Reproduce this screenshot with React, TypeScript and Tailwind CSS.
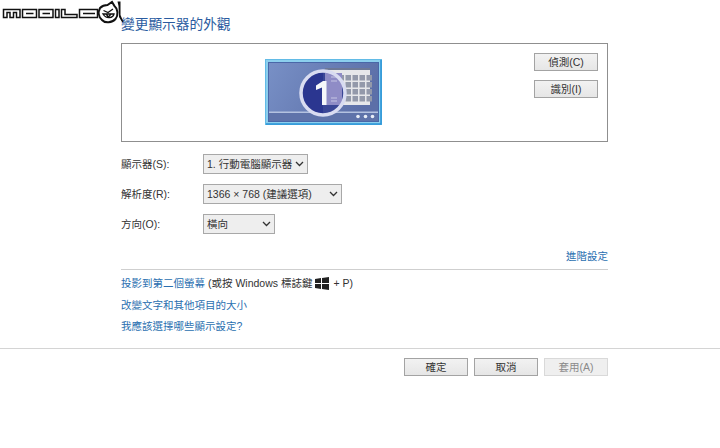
import React from "react";

const font = { fontFamily: '"Liberation Sans", "Noto Sans CJK TC", sans-serif' };

function Logo() {
  return (
    <svg width="125" height="24" viewBox="0 0 125 24" className="absolute left-0 top-0">
      <g fill="none" stroke="#111" strokeWidth="1.500">
        <path d="M3.500 17.500V9.500H20V17.500H16.500V12.500H13.500V17.500H10V12.500H7V17.500Z" />
        <rect x="22.500" y="9.500" width="14" height="8" />
        <path d="M26 13.500H33.500" />
        <path d="M39 9.500H53V17.500H39ZM42.500 13.500H50" />
        <path d="M55.500 9.500H59V17.500H55.500Z" />
        <path d="M61.500 9.500H65V14.500H77V17.500H61.500Z" />
        <path d="M79.500 9.500H97.500V17.500H79.500ZM83 13.500H95" />
      </g>
      <path d="M100 8C102 6 105 5 107.500 5L112 2L114.500 6C118 9 118.500 15 115.500 19C112 23 105 23.500 102 20C98.500 17 98 12 100 8Z" fill="#fff" stroke="#111" strokeWidth="2" />
      <path d="M103.500 10.500L108 12.500L113 9M103 14H114C113 18 106.500 19.500 103 14ZM106 14L108.500 17L111 14" fill="none" stroke="#111" strokeWidth="1.300" />
      <path d="M117.500 1.500H120.500V15L123.500 22H122L119 17L118.500 6Z" fill="#111" />
    </svg>
  );
}

function Monitor() {
  return (
    <svg width="117" height="66" viewBox="0 0 117 66" className="block">
      <defs>
        <linearGradient id="bg" x1="0" y1="0" x2="1" y2="0.300">
          <stop offset="0" stopColor="#7890c6" />
          <stop offset="1" stopColor="#5c6fa8" />
        </linearGradient>
      </defs>
      <rect x="0.500" y="0.500" width="116" height="65" fill="#8ccfee" stroke="#62bbe6" />
      <path d="M116 1V65H1" fill="none" stroke="#2a94d6" strokeWidth="1.500" />
      <rect x="3.500" y="3.500" width="110" height="59" fill="url(#bg)" stroke="#4a67a8" />
      <rect x="4" y="52.500" width="109" height="1.500" fill="#b4c2e0" />
      <rect x="4" y="54" width="109" height="8" fill="#5f73aa" />
      <circle cx="93" cy="57.500" r="1.800" fill="#e8edf6" />
      <circle cx="100.500" cy="57.500" r="1.800" fill="#e8edf6" />
      <circle cx="107.500" cy="57.500" r="1.800" fill="#e8edf6" />
      <rect x="60" y="9" width="45" height="37" fill="#e6e7ea" />
      <rect x="60" y="9" width="45" height="2" fill="#6d7896" />
      {[0, 1, 2, 3, 4].map((c) =>
        [0, 1, 2, 3].map((r) => (
          <rect key={`${c}-${r}`} x={73.500 + c * 7} y={16 + r * 7} width="5.500" height="5.500" fill="#9399aa" />
        ))
      )}
      <path d="M58 11.500A22.500 22.500 0 0 0 58 56.500Z" fill="#2b3690" />
      <path d="M58 11.500A22.500 22.500 0 0 1 58 56.500Z" fill="#3a4696" />
      <rect x="60" y="14" width="17" height="32" fill="#8f8cc6" />
      <g stroke="#c6c6e4" strokeWidth="1">
        <path d="M66 18H72M66 22H72M66 39H72M66 42H72" />
      </g>
      <circle cx="58" cy="34" r="22" fill="none" stroke="#d9dcf1" strokeWidth="3.500" />
      <path d="M51 26.500L58 22H61.500V46H57V28.500L51 31Z" fill="#f6f7fa" />
    </svg>
  );
}

function Btn({ children, disabled }: { children: React.ReactNode; disabled?: boolean }) {
  return (
    <div
      className={`w-[64px] h-[18px] flex items-center justify-center text-[10.500px] leading-none border ${
        disabled
          ? "border-[#d9d9d9] bg-[#efefef] text-[#8a8a8a]"
          : "border-[#a3a3a3] bg-gradient-to-b from-[#f2f2f2] to-[#e6e6e6] text-[#333]"
      }`}
    >
      {children}
    </div>
  );
}

function Row({ label, value, w, mt }: { label: string; value: string; w: string; mt: string }) {
  return (
    <div className={`flex items-center ${mt}`}>
      <div className="w-[82px] text-[10.500px] leading-none text-[#333]">{label}</div>
      <div className={`${w} h-[20px] flex items-center justify-between pl-[3px] pr-[3px] border border-[#a8a8a8] bg-[#eeeeee] text-[10.500px] leading-none text-[#333]`}>
        <span className="whitespace-nowrap">{value}</span>
        <svg width="9" height="6" viewBox="0 0 9 6" className="shrink-0">
          <path d="M1 1L4.500 4.500L8 1" fill="none" stroke="#333" strokeWidth="1.300" />
        </svg>
      </div>
    </div>
  );
}

export default function App() {
  return (
    <div className="relative w-[720px] h-[448px] bg-white overflow-hidden" style={font}>
      <Logo />
      <div className="pl-[121px] pr-[112px]">
        <div className="pt-[17px] h-[43px] text-[13.700px] leading-[16px] text-[#2a5ba0] whitespace-nowrap">變更顯示器的外觀</div>
        <div className="h-[99px] border border-[#8f8f8f] flex relative pt-[15px] pl-[143px]">
          <Monitor />
          <div className="absolute right-[9px] top-[9px] flex flex-col gap-[9px]">
            <Btn>偵測(C)</Btn>
            <Btn>識別(I)</Btn>
          </div>
        </div>
        <Row label="顯示器(S):" value="1. 行動電腦顯示器" w="w-[105px]" mt="mt-[12px]" />
        <Row label="解析度(R):" value="1366 × 768 (建議選項)" w="w-[139px]" mt="mt-[10px]" />
        <Row label="方向(O):" value="橫向" w="w-[72px]" mt="mt-[10px]" />
        <div className="mt-[15px] text-right text-[10.500px] leading-[14px] text-[#2a6fb0]">進階設定</div>
        <div className="mt-[6px] border-t border-[#cfcfcf]" />
        <div className="mt-[6px] flex items-center text-[10.500px] leading-[14px] text-[#333] whitespace-nowrap">
          <span className="text-[#2a6fb0]">投影到第二個螢幕</span>
          <span className="ml-[3px]">(或按 Windows 標誌鍵</span>
          <svg width="14" height="13" viewBox="0 0 14 13" className="ml-[3px]">
            <path d="M0 2L6 1V6H0ZM7 1L14 0V6H7ZM0 7H6V12L0 11ZM7 7H14V13L7 12Z" fill="#222" />
          </svg>
          <span className="ml-[4px]">+ P)</span>
        </div>
        <div className="mt-[8px] text-[10.500px] leading-[14px] text-[#2a6fb0]">改變文字和其他項目的大小</div>
        <div className="mt-[7px] text-[10.500px] leading-[14px] text-[#2a6fb0]">我應該選擇哪些顯示設定?</div>
      </div>
      <div className="mt-[15px] border-t border-[#d4d4d4]" />
      <div className="mt-[9px] pr-[112px] flex justify-end gap-[6px]">
        <Btn>確定</Btn>
        <Btn>取消</Btn>
        <Btn disabled>套用(A)</Btn>
      </div>
    </div>
  );
}
